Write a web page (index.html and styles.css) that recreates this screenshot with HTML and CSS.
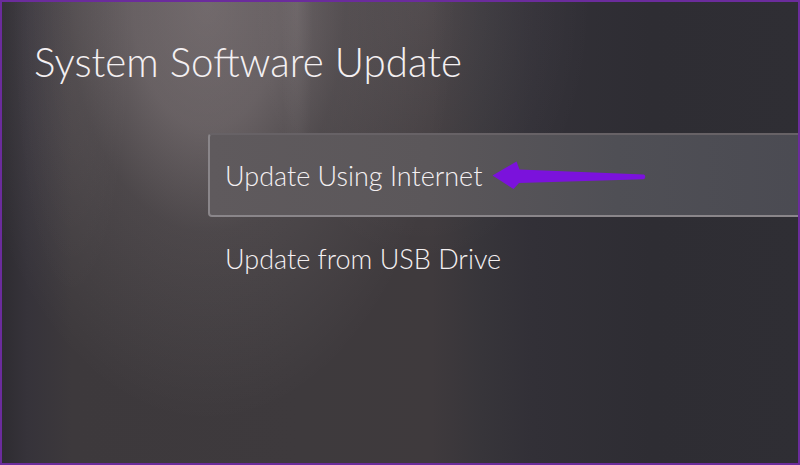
FILE: index.html
```html
<!DOCTYPE html>
<html>
<head>
<meta charset="utf-8">
<link rel="stylesheet" href="styles.css">
</head>
<body>
<div class="screen">
  <h1 class="title">System Software Update</h1>
  <ul class="menu">
    <li class="item selected">
      <span class="label">Update Using Internet</span>
      <svg class="arrow" width="160" height="34" viewBox="0 0 160 34">
        <path d="M3.5 17.5 L27.5 3.5 L30.5 11.5 L155 16.6 Q157.5 18.8 155 21.2 L30 25 L24.5 31 Z" fill="#7b12dc"/>
      </svg>
    </li>
    <li class="item">
      <span class="label">Update from USB Drive</span>
    </li>
  </ul>
</div>
</body>
</html>
```

FILE: styles.css
```css
html, body {
  margin: 0;
  padding: 0;
  background: #2c2a2f;
}
.screen {
  box-sizing: border-box;
  width: 800px;
  height: 465px;
  overflow: hidden;
  border: 2px solid #6b2c9c;
  padding: 35px 0 0 32px;
  font-family: "Lato", "Open Sans", sans-serif;
  color: #f4f0f2;
  background:
    radial-gradient(ellipse 250px 420px at 205px 0px,
      rgba(255,236,236,0.27) 0%,
      rgba(255,236,236,0.22) 30%,
      rgba(255,236,236,0.08) 55%,
      rgba(255,236,236,0) 100%),
    radial-gradient(ellipse 16px 220px at 295px 0px, rgba(255,240,240,0.06), rgba(255,240,240,0) 100%),
    radial-gradient(ellipse 170px 260px at 420px 0px, rgba(255,236,236,0.08), rgba(255,236,236,0) 100%),
    radial-gradient(ellipse 60px 300px at 70px 0px, rgba(255,236,236,0.05), rgba(255,236,236,0) 100%),
    linear-gradient(90deg,
      #2e2c31 0px,
      #36333a 25px,
      #3d393c 70px,
      #3e3a3d 300px,
      #3f3a3d 430px,
      #37353a 480px,
      #323037 530px,
      #2e2d33 650px,
      #2f2e34 800px);
}
.title {
  margin: 0;
  font-weight: 300;
  font-size: 40.3px;
  line-height: 50px;
}
.menu {
  list-style: none;
  margin: 46px 0 0 174px;
  padding: 0;
}
.item {
  display: flex;
  align-items: center;
  height: 82px;
  padding-left: 17px;
  font-size: 27px;
  font-weight: 300;
}
.selected {
  height: 80px;
  padding-left: 15px;
  margin-right: -40px;
  border: 2px solid #8a868a;
  border-top-color: #676266;
  border-radius: 4px;
  background: linear-gradient(90deg, #5f5a5d 0%, #5b575a 35%, #4f4f55 65%, #4a4a52 100%);
}
.arrow {
  flex: none;
  margin-left: 7px;
}
```
